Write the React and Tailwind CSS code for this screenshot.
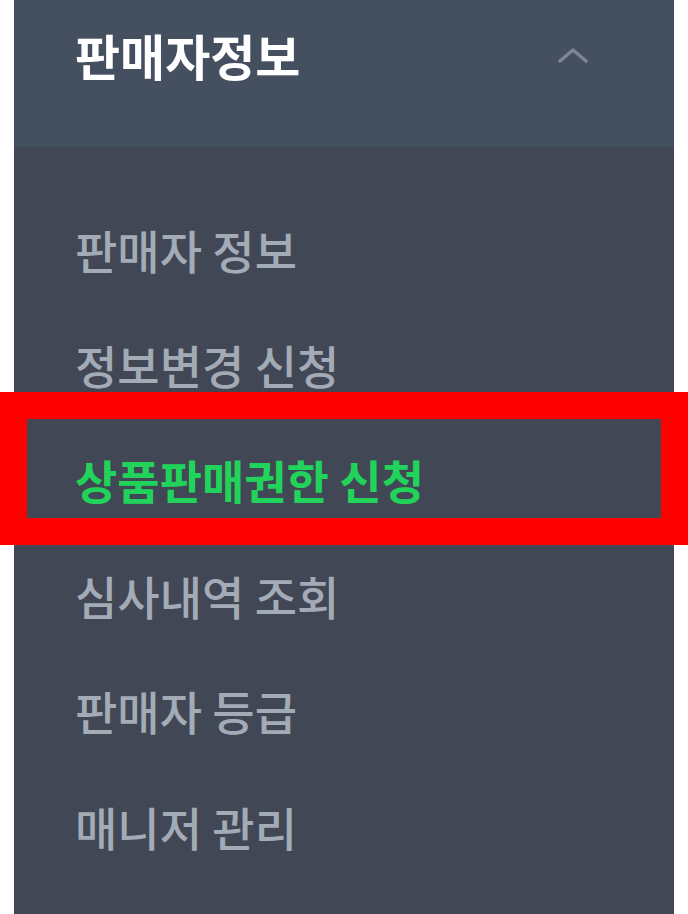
import React from "react";

const items = [
  { label: "판매자 정보" },
  { label: "정보변경 신청" },
  { label: "상품판매권한 신청", active: true },
  { label: "심사내역 조회" },
  { label: "판매자 등급" },
  { label: "매니저 관리" },
];

export default function App() {
  return (
    <div className="relative w-[688px] h-[914px] bg-white overflow-hidden" style={{ fontFamily: '"Noto Sans CJK KR", "Noto Sans", sans-serif' }}>
      <div className="ml-[14px] w-[660px] h-[914px] bg-[#414755] flex flex-col">
        <div className="h-[147px] bg-[#444f5f] flex items-start justify-between pl-[61px] pr-[86px] pt-[21px]">
          <span className="text-[49px] leading-[68px] font-bold text-white">판매자정보</span>
          <svg className="mt-[26px]" width="30" height="16" viewBox="0 0 30 16" fill="none">
            <polyline points="2,14 15,3 28,14" stroke="#7c8696" strokeWidth="3.5" strokeLinecap="round" strokeLinejoin="round" />
          </svg>
        </div>
        <ul className="pt-[44px] flex flex-col">
          {items.map((it) => (
            <li key={it.label} className="h-[115.4px] flex items-center pl-[61px]">
              <span className={"text-[46px] leading-none " + (it.active ? "text-[#21d35a] font-semibold" : "text-[#a3abb6] font-medium")}>
                {it.label}
              </span>
            </li>
          ))}
        </ul>
      </div>
      <div className="absolute left-0 top-[392px] w-[688px] h-[153px] border-[27px] border-[#ff0000]" />
    </div>
  );
}
